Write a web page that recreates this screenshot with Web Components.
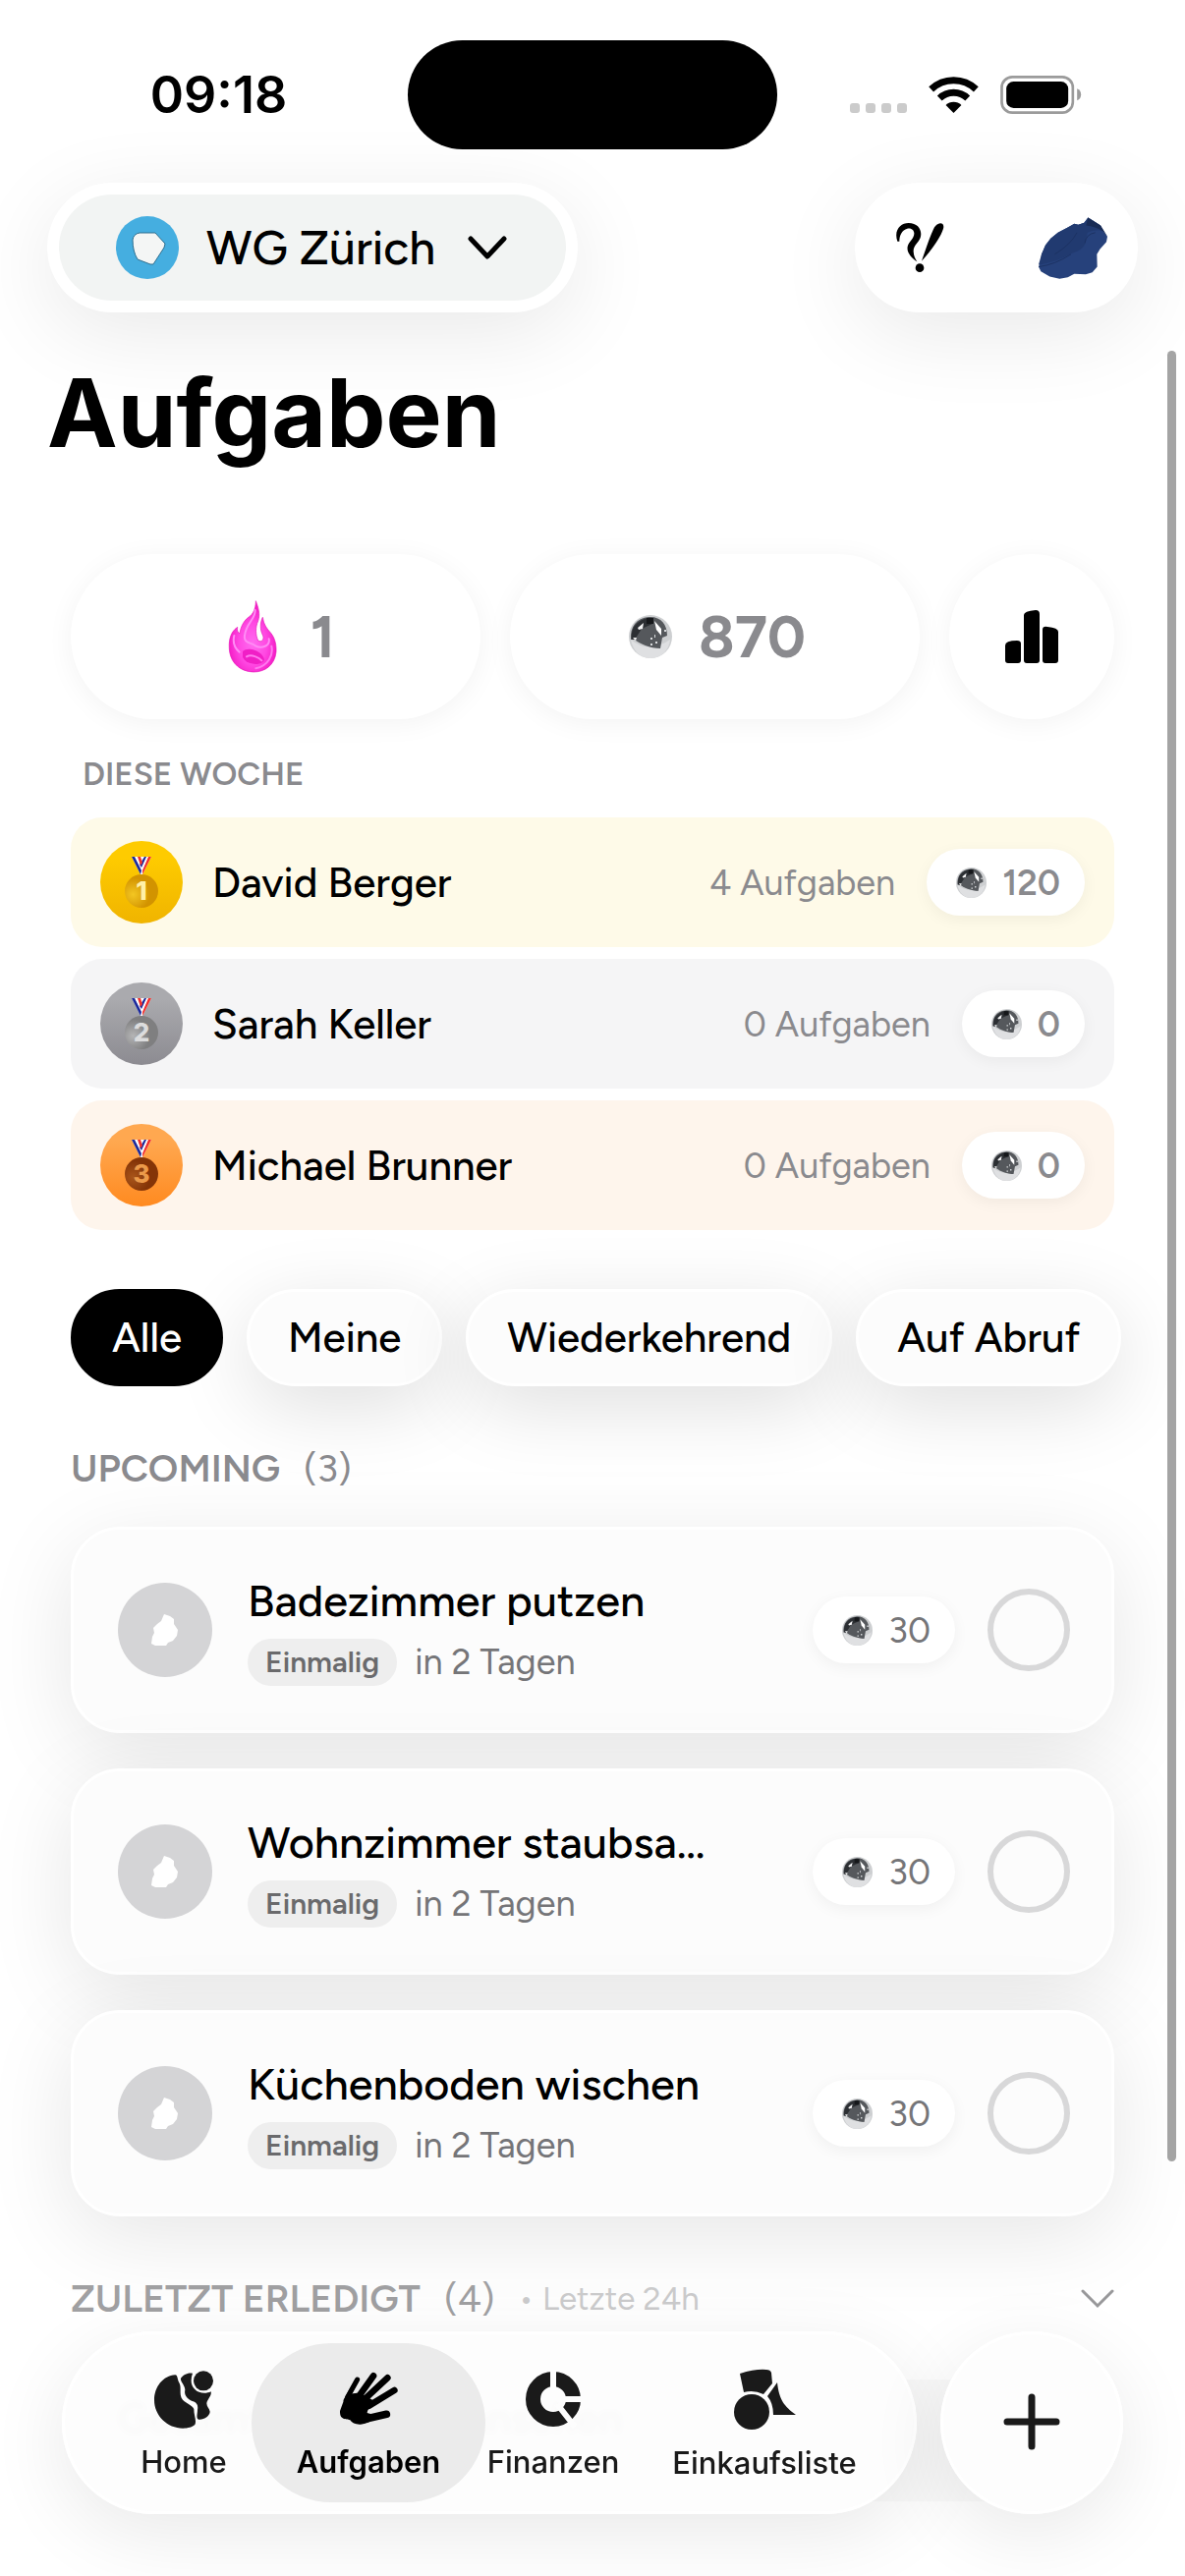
<!DOCTYPE html>
<html lang="de">

<head>
  <meta charset="UTF-8">
  <meta name="viewport" content="width=device-width, initial-scale=1.0">
  <title>Aufgaben</title>
  <style>
    body {
      margin: 0;
      background: #fff;
      color: #000;
      font-family: Figtree, Roboto, "Liberation Sans", sans-serif;
      --system: Inter, "Liberation Sans", sans-serif;
      --muted: #8a8a8e;
      --glass-shadow: 0 20px 88px rgba(0, 0, 0, .1);
      --pill-shadow: 0 4px 16px rgba(0, 0, 0, .05);
    }
  </style>
</head>

<body>
  <template id="app-shell">
    <style>
      :host {
        display: block;
        position: relative;
        height: 100vh;
        overflow: hidden;
      }

      ::slotted(tab-bar) {
        position: absolute;
        left: 0;
        right: 0;
        bottom: 0;
      }

      .scrollbar {
        position: absolute;
        top: 357px;
        bottom: 422px;
        right: 9px;
        width: 9px;
        border-radius: 5px;
        background: #a4a4a4;
      }
    </style>
    <slot></slot>
    <slot name="bar"></slot>
    <div class="scrollbar"></div>
  </template>

  <template id="status-bar">
    <style>
      :host {
        display: grid;
        grid-template-columns: 1fr 376px 1fr;
        align-items: center;
        height: 111px;
        padding: 41px 0 34px;
      }

      time {
        padding-left: 30px;
        text-align: center;
        font: 600 52px/60px var(--system);
      }

      .island {
        height: 111px;
        border-radius: 56px;
        background: #000;
      }

      .signals {
        display: flex;
        justify-content: center;
        align-items: flex-end;
        gap: 22px;
        padding-right: 32px;
      }
    </style>
    <time>09:18</time>
    <div class="island"></div>
    <div class="signals">
      <svg width="58" height="12" viewBox="0 0 58 12" fill="#cbcbcb">
        <rect y="1" width="10" height="10" rx="3" />
        <rect x="16" y="1" width="10" height="10" rx="3" />
        <rect x="32" y="1" width="10" height="10" rx="3" />
        <rect x="48" y="1" width="10" height="10" rx="3" />
      </svg>
      <svg width="51" height="39" viewBox="255 54 154 117">
        <path d="M263 95.500A100 100 0 0 1 401 95.500M289 123A62 62 0 0 1 375 123" fill="none" stroke="#000" stroke-width="21" />
        <path d="M332 168L308 144A34 34 0 0 1 356 144Z" />
      </svg>
      <svg width="83" height="39" viewBox="474 54 248 117">
        <rect x="478" y="58" width="217" height="109" rx="32" fill="none" stroke="#9b9b9b" stroke-width="8" />
        <rect x="492" y="72" width="189" height="81" rx="22" />
        <path d="M708 94C716 97 720 104 720 112C720 120 716 127 708 130Z" fill="#9b9b9b" />
      </svg>
    </div>
  </template>

  <template id="top-bar">
    <style>
      :host {
        display: flex;
        justify-content: space-between;
        padding: 0 48px;
      }

      button {
        display: flex;
        align-items: center;
        margin: 0;
        border: 0;
        background: none;
        color: inherit;
        font: inherit;
      }

      .glass {
        display: flex;
        box-sizing: border-box;
        height: 132px;
        padding: 12px;
        border-radius: 66px;
        background: #fff;
        box-shadow: 0 20px 88px rgba(0, 0, 0, .09);
      }

      .home {
        gap: 27px;
        padding: 0 60px 0 58px;
        border-radius: 54px;
        background: #f2f4f3;
        font-size: 48px;
        font-weight: 500;
        white-space: nowrap;
      }

      .chevron {
        margin-left: 6px;
      }

      .actions {
        justify-content: space-between;
        width: 288px;
      }

      .actions button {
        padding: 0 18px;
      }

      .actions button:first-child {
        padding-left: 28px;
      }
    </style>
    <div class="glass">
      <button class="home">
        <svg width="65" height="65" viewBox="0 0 65 65">
          <circle cx="32" cy="32" r="32" fill="#45aee0" />
          <path d="M17 24Q18 18 24 17L40 17L50 28L49 32L38 49L35 49L22 44Q17 36 17 24Z" fill="#f4f6f5" stroke="#2f6f8f" />
        </svg>
        <slot></slot>
        <svg class="chevron" width="40" height="24" viewBox="0 0 40 24">
          <path d="M3 3L20 21L37 3" fill="none" stroke="#000" stroke-width="5" stroke-linecap="round" stroke-linejoin="round" />
        </svg>
      </button>
    </div>
    <div class="glass actions">
      <button aria-label="Hilfe">
        <svg width="52" height="52" viewBox="150 498 156 156">
          <path d="M160 557C148 522 170 501 194 501C224 501 237 524 230 546C224 562 208 570 209 588C210 602 214 610 220 619C200 605 188 590 191 573C194 558 212 548 211 532C210 520 200 516 190 518C174 522 166 538 166 557Z" />
          <path d="M284 504C294 499 304 504 300 518C290 550 258 590 234 617C246 582 258 546 270 520C274 511 278 507 284 504Z" />
          <circle cx="228" cy="638" r="13" />
        </svg>
      </button>
      <button aria-label="Profil">
        <svg width="72" height="65" viewBox="588 474 216 194">
          <path d="M700 497L712 500L730 494L742 478L758 488L780 502L788 518L801 536L798 552L778 575L769 590L770 628L755 645L735 651L700 650L680 660L655 665L625 658L598 642L591 628L598 610L600 590L612 562L628 542L650 524L680 508Z" fill="#26417b" />
          <path d="M591 622Q650 612 690 588Q730 576 735 552L740 524Q760 512 788 518L780 502L742 478L730 494L712 500L700 497L680 508L650 524L628 542L612 562L600 590Z" fill="#213a70" />
          <path d="M742 478L736 502Q765 505 788 520L801 536L788 514L780 502Z" fill="#182b55" />
          <path d="M592 628Q640 622 690 590M640 590Q690 560 708 524M732 556Q736 528 764 524" fill="none" stroke="#1c3263" stroke-width="3" />
        </svg>
      </button>
    </div>
  </template>

  <template id="gem-icon">
    <style>
      :host {
        display: block;
        width: 31px;
        height: 31px;
      }

      :host([large]) {
        width: 44px;
        height: 44px;
        margin: 0 5px;
      }

      svg {
        display: block;
      }
    </style>
    <svg width="100%" height="100%" viewBox="0 0 44 44">
      <circle cx="22" cy="22" r="22" fill="#cdcfd1" />
      <path d="M2 25Q20 40 42 25C41 36 33 44 22 44C11 44 4 36 2 25Z" fill="#dfe0e2" />
      <path d="M2 25C1 12 8 3 20 2C32 1 39 9 39 21L34 23L32 34C22 34 10 29 6 25Z" fill="#55585c" />
      <path d="M5 12Q12 3 22 3L24 9L13 14L6 25L3 25Q2 18 5 12Z" fill="#2c2f33" />
      <path d="M18 3H25V9H18Z" fill="#15171a" />
      <path d="M26 6L33 14V21L28 15Z" fill="#fff" />
      <path d="M9 13L15 8L14 14L10 15ZM4 23H8L7 26Z" fill="#f4f4f5" />
      <path d="M22 23h2v2h-2zM26 20h1v3h-1zM27 27h2v2h-2zM22 29h2v2h-2zM36 15h2v2h-2z" fill="#d8dadc" />
    </svg>
  </template>

  <template id="stat-row">
    <style>
      :host {
        display: grid;
        grid-template-columns: 1fr 1fr 168px;
        gap: 30px;
        margin: 84px 72px 0;
      }
    </style>
    <slot></slot>
  </template>

  <template id="stat-card">
    <style>
      :host {
        display: flex;
        justify-content: center;
        align-items: center;
        gap: 22px;
        height: 168px;
        border-radius: 84px;
        background: #fff;
        box-shadow: 0 4px 28px rgba(0, 0, 0, .05);
        color: var(--muted);
        font-size: 60px;
        font-weight: 700;
      }
    </style>
    <slot name="icon"></slot>
    <slot></slot>
  </template>

  <template id="week-ranking">
    <style>
      :host {
        display: flex;
        flex-direction: column;
        gap: 12px;
        margin: 36px 72px 0;
      }

      h2 {
        margin: 0 12px 12px;
        color: var(--muted);
        font-size: 33px;
        line-height: 40px;
        font-weight: 600;
        text-transform: uppercase;
      }
    </style>
    <h2>Diese Woche</h2>
    <slot></slot>
  </template>

  <template id="score-pill">
    <style>
      :host {
        display: flex;
        align-items: center;
        gap: 16px;
        box-sizing: border-box;
        height: 68px;
        padding: 0 25px 0 30px;
        border-radius: 34px;
        background: #fff;
        box-shadow: var(--pill-shadow);
        font-size: 36px;
      }
    </style>
    <gem-icon></gem-icon>
    <slot></slot>
  </template>

  <template id="rank-row">
    <style>
      :host {
        display: flex;
        align-items: center;
        box-sizing: border-box;
        height: 132px;
        padding: 0 30px;
        border-radius: 32px;
        background: var(--row);
      }

      svg {
        margin-right: 30px;
      }

      .name {
        flex: 1;
        font-size: 42px;
        font-weight: 500;
      }

      .count {
        margin-right: 32px;
        color: var(--muted);
        font-size: 36px;
      }

      score-pill {
        color: var(--muted);
        font-weight: 600;
      }
    </style>
    <svg width="84" height="84" viewBox="0 0 84 84">
      <defs>
        <linearGradient id="back" x2="0" y2="1">
          <stop offset=".2" style="stop-color: var(--from)" />
          <stop offset="1" style="stop-color: var(--to)" />
        </linearGradient>
        <radialGradient id="coin" cx=".25" cy=".6">
          <stop style="stop-color: var(--coin-light)" />
          <stop offset="1" style="stop-color: var(--coin)" />
        </radialGradient>
      </defs>
      <circle cx="42" cy="42" r="42" fill="url(#back)" />
      <path d="M32 16H52L43 34H41Z" fill="#fff" />
      <path d="M32 16H35L42 30L41 34ZM45 16H47L42 27L40 24Z" fill="#1c2a9c" />
      <path d="M52 16H49L43 30L43 34ZM38 16H41L43 22L41 25Z" fill="#f3302c" />
      <circle cx="42" cy="51" r="17" fill="url(#coin)" />
      <text x="42" y="60" text-anchor="middle" font-family="Inter, sans-serif" font-size="26" font-weight="800" style="fill: var(--digit)"></text>
    </svg>
    <span class="name"><slot></slot></span>
    <span class="count"></span>
    <score-pill></score-pill>
  </template>

  <template id="filter-row">
    <style>
      :host {
        display: flex;
        gap: 24px;
        margin: 60px 0 0 72px;
      }
    </style>
    <slot></slot>
  </template>

  <template id="filter-chip">
    <style>
      :host {
        display: block;
        flex: none;
      }

      button {
        box-sizing: border-box;
        height: 99px;
        padding: 0 39px;
        border: 3px solid #fff;
        border-radius: 50px;
        background: #fcfcfc;
        box-shadow: 0 20px 80px rgba(0, 0, 0, .13);
        color: #000;
        font: inherit;
        font-size: 42px;
        font-weight: 500;
        white-space: nowrap;
      }

      :host([active]) button {
        border-color: #000;
        background: #000;
        box-shadow: none;
        color: #fff;
      }
    </style>
    <button><slot></slot></button>
  </template>

  <template id="section-title">
    <style>
      :host {
        display: flex;
        align-items: center;
        gap: 24px;
        position: relative;
        margin: 60px 72px 35px;
        color: var(--muted);
        font-size: 39px;
        line-height: 48px;
      }

      h2 {
        margin: 0;
        font: inherit;
        font-weight: 600;
        text-transform: uppercase;
      }
    </style>
    <h2><slot></slot></h2>
    <span></span>
    <slot name="extra"></slot>
  </template>

  <template id="task-card">
    <style>
      :host {
        display: flex;
        align-items: center;
        box-sizing: border-box;
        height: 210px;
        margin: 0 72px 36px;
        padding: 0 42px 0 45px;
        border: 3px solid #fff;
        border-radius: 50px;
        background: #fcfcfc;
        box-shadow: var(--glass-shadow);
      }

      .avatar {
        display: flex;
        justify-content: center;
        align-items: center;
        flex: none;
        width: 96px;
        height: 96px;
        margin-right: 36px;
        border-radius: 50%;
        background: #d4d4d6;
      }

      .text {
        flex: 1;
        min-width: 0;
        margin-right: 105px;
      }

      label {
        display: block;
        overflow: hidden;
        font-size: 45px;
        line-height: 54px;
        font-weight: 500;
        white-space: nowrap;
        text-overflow: ellipsis;
      }

      .meta {
        display: flex;
        align-items: center;
        gap: 18px;
        margin-top: 12px;
        color: #757578;
        font-size: 36px;
        line-height: 48px;
      }

      .kind {
        padding: 0 18px;
        border-radius: 24px;
        background: #eee;
        color: #6a6a6c;
        font-size: 30px;
        font-weight: 600;
      }

      score-pill {
        margin-right: 33px;
        color: #757578;
      }

      input {
        appearance: none;
        box-sizing: border-box;
        flex: none;
        width: 84px;
        height: 84px;
        margin: 0;
        border: 6px solid #d8d8d9;
        border-radius: 50%;
      }
    </style>
    <div class="avatar">
      <svg width="28" height="34" viewBox="0 0 28 34">
        <path d="M13 1L19 3L23 6L23 11L27 17L26 23L22 28L17 30L15 33H4L0 31L1 24L3 20L2 15L6 11L10 8Z" fill="#fff" />
      </svg>
    </div>
    <div class="text">
      <label for="done"><slot></slot></label>
      <div class="meta"><span class="kind">Einmalig</span><span>in 2 Tagen</span></div>
    </div>
    <score-pill>30</score-pill>
    <input type="checkbox" id="done">
  </template>

  <template id="history-link">
    <style>
      :host {
        display: block;
        margin: 58px 72px 0;
      }

      a {
        display: block;
        padding: 15px 48px 59px;
        border-radius: 60px;
        background: rgba(0, 0, 0, .02);
        color: #c6c6c6;
        font-size: 42px;
        line-height: 50px;
        font-weight: 600;
        text-decoration: none;
      }
    </style>
    <a href="#verlauf"><slot></slot></a>
  </template>

  <template id="tab-bar">
    <style>
      :host {
        display: flex;
        gap: 24px;
        padding: 0 63px 63px;
      }

      nav,
      button {
        box-sizing: border-box;
        height: 186px;
        border: 3px solid #fff;
        border-radius: 93px;
        background: rgba(253, 253, 253, .93);
        box-shadow: 0 20px 80px rgba(0, 0, 0, .09);
        backdrop-filter: blur(3px);
      }

      nav {
        display: grid;
        flex: 1;
        grid-template-columns: 188fr 188fr 188fr 242fr;
        padding: 9px 31px 9px 27px;
      }

      button {
        flex: none;
        width: 186px;
        padding: 0;
      }
    </style>
    <nav><slot></slot></nav>
    <button aria-label="Neue Aufgabe">
      <svg width="58" height="58" viewBox="0 0 58 58">
        <path d="M29 4V54M4 29H54" stroke="#1a1a1a" stroke-width="7" stroke-linecap="round" />
      </svg>
    </button>
  </template>

  <template id="tab-item">
    <style>
      :host {
        display: block;
      }

      a {
        display: flex;
        flex-direction: column;
        align-items: center;
        justify-content: center;
        gap: 16px;
        box-sizing: border-box;
        height: 162px;
        margin: 0 -25px;
        padding-top: 4px;
        border-radius: 81px;
        color: #1a1a1a;
        font: 500 31px/36px var(--system);
        text-decoration: none;
      }

      :host([active]) a {
        background: #ebebeb;
        color: #000;
        font-weight: 600;
      }
    </style>
    <a><slot name="icon"></slot><span><slot></slot></span></a>
  </template>

  <app-shell>
    <status-bar></status-bar>
    <top-bar>WG Zürich</top-bar>
    <page-title>Aufgaben</page-title>

    <stat-row>
      <stat-card>
        <svg slot="icon" width="74" height="74" viewBox="-9 32 222 222">
          <defs>
            <radialGradient id="fire" cx=".5" cy=".6">
              <stop stop-color="#ff6cf0" />
              <stop offset=".6" stop-color="#ff48e2" />
              <stop offset="1" stop-color="#f51fc8" />
            </radialGradient>
          </defs>
          <path d="M112 34C120 55 126 75 119 95C110 115 111 138 119 155C130 162 138 152 134 140C124 122 125 100 133 84C136 105 145 118 158 132C172 150 175 170 174 190C170 230 140 251 105 251C65 250 38 225 32 190C28 160 32 130 56 114C54 125 58 132 63 133C66 110 78 90 95 80C108 68 112 50 112 34Z" fill="url(#fire)" stroke="#e517b8" stroke-width="2" />
          <path d="M110 62C112 90 82 100 78 140C74 165 100 160 112 172C130 180 156 172 152 150M46 140C40 165 50 180 62 190" fill="none" stroke="#ff8cf5" stroke-width="6" stroke-linecap="round" />
          <path d="M72 188C90 170 136 190 138 214C132 232 84 232 72 206Z" fill="#f01fc6" />
          <path d="M84 204C98 196 122 206 130 216M160 172C166 200 150 232 112 240" fill="none" stroke="#ff7bef" stroke-width="6" stroke-linecap="round" />
        </svg>
        1
      </stat-card>
      <stat-card><gem-icon large slot="icon"></gem-icon>870</stat-card>
      <stat-card>
        <svg slot="icon" width="54" height="54" viewBox="0 0 54 54" fill="#000">
          <path d="M0 36Q0 31 12 31Q16 31 16 34V51Q16 54 13 54H3Q0 54 0 51ZM19 5Q19 1 31 0Q35 0 35 4V51Q35 54 32 54H22Q19 54 19 51ZM38 20Q38 16 43 17Q54 18 54 22V51Q54 54 51 54H41Q38 54 38 51Z" />
        </svg>
      </stat-card>
    </stat-row>

    <week-ranking>
      <rank-row place="1" count="4" points="120">David Berger</rank-row>
      <rank-row place="2" count="0" points="0">Sarah Keller</rank-row>
      <rank-row place="3" count="0" points="0">Michael Brunner</rank-row>
    </week-ranking>

    <filter-row>
      <filter-chip active>Alle</filter-chip>
      <filter-chip>Meine</filter-chip>
      <filter-chip>Wiederkehrend</filter-chip>
      <filter-chip>Auf Abruf</filter-chip>
    </filter-row>

    <section-title count="3">Upcoming</section-title>
    <task-card>Badezimmer putzen</task-card>
    <task-card>Wohnzimmer staubsaugen</task-card>
    <task-card>Küchenboden wischen</task-card>

    <section-title count="4" style="color: #a0a0a2">
      Zuletzt erledigt
      <span slot="extra" style="flex: 1; color: #cbcbcc; font-size: 33px">• Letzte 24h</span>
      <svg slot="extra" width="34" height="20" viewBox="0 0 34 20">
        <path d="M2 2L17 17L32 2" fill="none" stroke="#98989a" stroke-width="3" stroke-linecap="round" />
      </svg>
    </section-title>
    <history-link>Gesamten Verlauf ansehen</history-link>

    <tab-bar slot="bar">
      <tab-item href="#home">
        <svg slot="icon" width="62" height="60" viewBox="345 222 186 180" fill="#1a1a1a">
          <path d="M412 238C375 240 348 275 348 315C348 362 388 401 436 401C450 401 465 397 472 390C478 378 469 362 469 342C464 328 440 325 431 308C424 292 432 275 424 262C418 252 420 238 412 238Z" />
          <path d="M465 233C450 230 436 238 429 248C427 260 442 268 442 284C438 300 450 312 462 317C480 322 482 332 480 345C480 358 475 370 483 374C500 376 518 362 518 350C516 340 508 335 508 325C510 312 524 302 521 289C505 297 483 294 472 282C458 268 459 250 465 233Z" />
          <circle cx="498" cy="256" r="30" />
        </svg>
        Home
      </tab-item>
      <tab-item href="#aufgaben" active>
        <svg slot="icon" width="60" height="60" viewBox="918 224 180 180" fill="#000" stroke="#000" stroke-linecap="round">
          <path d="M930 325C938 298 965 292 985 296L1030 322C1012 340 1005 345 1004 356L1025 362L1010 384C985 396 960 392 952 378C940 372 920 380 921 350Z" stroke="none" />
          <path d="M974 254L944 308" stroke-width="15" />
          <path d="M973 256L938 318" stroke-width="13" />
          <path d="M1023 243L978 306M1066 249L992 318M1087 287L1010 334" stroke-width="20" />
          <path d="M1063 360L985 378" stroke-width="23" />
        </svg>
        Aufgaben
      </tab-item>
      <tab-item href="#finanzen">
        <svg slot="icon" width="56" height="60" viewBox="0 -2 56 60" fill="none">
          <circle cx="28" cy="28" r="20.500" stroke="#1a1a1a" stroke-width="15" />
          <path d="M28 24V-1M32 28H57M32 33L50 56" stroke="#fdfdfd" stroke-width="6" />
        </svg>
        Finanzen
      </tab-item>
      <tab-item href="#einkaufsliste">
        <svg slot="icon" width="63" height="62" viewBox="0 0 63 62" fill="#1a1a1a">
          <path d="M6 5Q22 0 33 1Q37 1 38 4L39 15L30 26Q20 21 10 24Z" />
          <path d="M44 14C46 32 51 38 63 47L40 47Q40 35 34 28Z" />
          <circle cx="18" cy="44" r="18" />
        </svg>
        Einkaufsliste
      </tab-item>
    </tab-bar>
  </app-shell>
</body>
<script>
  // shared base: clones the <template> whose id is the tag name
  class BaseElement extends HTMLElement {
    constructor() {
      super();
      const shadowRoot = this.attachShadow({ mode: 'open' });
      const template = document.getElementById(this.localName);
      shadowRoot.appendChild(template.content.cloneNode(true));
    }
  }

  class PageTitle extends HTMLElement {
    constructor() {
      super();
      this.attachShadow({ mode: 'open' }).innerHTML = `
        <style>
          :host { display: block; margin: 42px 48px 0; }
          h1 { margin: 0; font: 700 96px/120px var(--system); }
        </style>
        <h1><slot></slot></h1>
      `;
    }
  }

  const medals = {
    1: { row: '#fefae8', from: '#fecb00', to: '#f0b400', coin: '#d29300', 'coin-light': '#f3c622', digit: '#fff0a8' },
    2: { row: '#f5f5f6', from: '#aaaaae', to: '#8c8b91', coin: '#7f7f80', 'coin-light': '#b5b5b6', digit: '#dcdcdd' },
    3: { row: '#fef5ec', from: '#ffa850', to: '#ff8a20', coin: '#843407', 'coin-light': '#a9551a', digit: '#eb9a4a' }
  };

  class RankRow extends BaseElement {
    constructor() {
      super();
      const root = this.shadowRoot;
      const place = this.getAttribute('place');
      Object.entries(medals[place]).forEach(([key, value]) => {
        this.style.setProperty(`--${key}`, value);
      });
      root.querySelector('text').textContent = place;
      root.querySelector('.count').textContent = `${this.getAttribute('count')} Aufgaben`;
      root.querySelector('score-pill').textContent = this.getAttribute('points');
    }
  }

  class SectionTitle extends BaseElement {
    constructor() {
      super();
      this.shadowRoot.querySelector('span').textContent = `(${this.getAttribute('count')})`;
    }
  }

  class TabItem extends BaseElement {
    constructor() {
      super();
      this.shadowRoot.querySelector('a').href = this.getAttribute('href');
    }
  }

  ['app-shell', 'status-bar', 'top-bar', 'gem-icon', 'stat-row', 'stat-card', 'week-ranking', 'score-pill',
    'filter-row', 'filter-chip', 'task-card', 'history-link', 'tab-bar'].forEach((name) => {
      window.customElements.define(name, class extends BaseElement { });
    });
  window.customElements.define('page-title', PageTitle);
  window.customElements.define('rank-row', RankRow);
  window.customElements.define('section-title', SectionTitle);
  window.customElements.define('tab-item', TabItem);
</script>

</html>
